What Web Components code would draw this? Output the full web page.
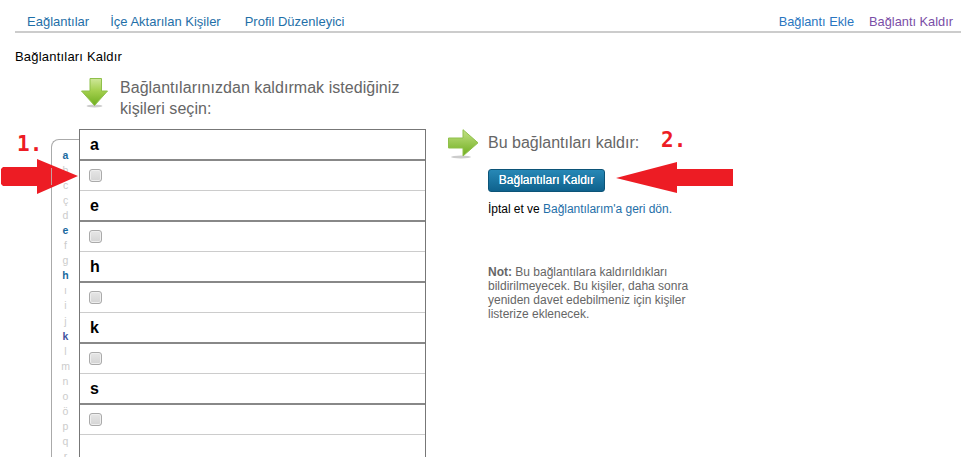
<!DOCTYPE html>
<html lang="tr"><head><meta charset="utf-8"><title>Bağlantıları Kaldır</title>
<style>
html,body{margin:0;padding:0;background:#fff;height:457px;overflow:hidden}
body{font-family:"Liberation Sans",Arial,sans-serif;color:#000}
</style></head><body>
<app-page></app-page>
<script>
function def(name, html, init){
  customElements.define(name, class extends HTMLElement{
    constructor(){super();const s=this.attachShadow({mode:"open"});s.innerHTML=html;}
    connectedCallback(){ if(init&&!this._i){this._i=1;init(this);} }
  });
}
def("top-nav",`<style>
:host{display:flex;justify-content:space-between;margin:0 3px 0 15px;height:31px;border-bottom:2px solid #ccc;font-size:13px}
div{display:flex;padding:14px 8px 0 12px;gap:21px;line-height:15px}
a{color:#1f6fa8;text-decoration:none;white-space:nowrap}
a:nth-child(3){margin-left:3px}
a.r{color:#2a76c0}a.v{color:#7a4ea6}
div.e{gap:15px;padding-right:8px;font-size:12.8px}
</style>
<div><a>Eağlantılar</a><a>İçe Aktarılan Kişiler</a><a>Profil Düzenleyici</a></div>
<div class="e"><a class="r">Bağlantı Ekle</a><a class="v">Bağlantı Kaldır</a></div>`);

def("step-heading",`<style>
:host{display:flex;font-size:16px;line-height:21px;color:#666;letter-spacing:.05px}
</style><slot name="icon"></slot><span><slot></slot></span>`);

def("alpha-tab",`<style>
:host{display:block;width:27px;height:330px;margin-top:10px;border:1px solid #aaa;border-right:0;border-bottom:0;border-radius:8px 0 0 0;background:#fff}
ul{list-style:none;margin:0;padding:8px 0 0;text-align:center;font-size:10.5px;line-height:15px;color:#ccc}
li{height:15.05px}
b{color:#1a6a9f}
b.d{color:#3f559e}
</style><ul id="u"></ul>`, el=>{
  const u=el.shadowRoot.getElementById("u");
  const on=["a","e","h","k"];
  "a b c ç d e f g h ı i j k l m n o ö p q r".split(" ").forEach(c=>{
    const li=document.createElement("li");
    if(on.includes(c)){const b=document.createElement("b");b.textContent=c;if(c=="k")b.className="d";li.append(b);}else li.textContent=c;
    u.append(li);
  });
});

def("letter-row",`<style>
:host{display:flex;align-items:center;box-sizing:border-box;height:31px;padding-left:10px;border-bottom:2px solid #888;font:bold 16px "Liberation Sans",Arial,sans-serif}
</style><slot></slot>`);
def("check-row",`<style>
:host{display:flex;align-items:center;box-sizing:border-box;height:30px;padding-left:9px;border-bottom:1px solid #ccc}
i{display:block;width:11px;height:11px;border:1px solid #aaa;border-radius:3px;background:linear-gradient(#e6e6e6,#d4d4d4);box-shadow:inset 0 0 0 1px #eee}
</style><i></i>`);

def("friend-list",`<style>
:host{display:block;width:347px;height:340px;box-sizing:border-box;border:1px solid #777;border-bottom:0;background:#fff;overflow:hidden}
</style>
<letter-row>a</letter-row><check-row></check-row>
<letter-row>e</letter-row><check-row></check-row>
<letter-row>h</letter-row><check-row></check-row>
<letter-row>k</letter-row><check-row></check-row>
<letter-row>s</letter-row><check-row></check-row>`);

def("side-panel",`<style>
:host{display:block;width:260px;font-size:12px;line-height:14px}
.btn{box-sizing:border-box;width:117px;height:23px;margin:10px 0 0 40px;border:1px solid #0c5478;border-radius:3px;background:linear-gradient(#2788b6,#0f628d);color:#fff;font:400 12px/21px "Liberation Sans",Arial,sans-serif;text-align:center;text-shadow:0 0 .5px #fff}
p{margin:0 0 0 40px}
.c{margin-top:10px;letter-spacing:-.03px}
a{color:#1f6fa8}
.n{margin-top:49px;width:215px;color:#666}
.h{display:flex;font-size:16px;line-height:20px;color:#666;align-items:center;height:30px}
.h span{margin-left:9px;margin-top:-3px}
</style>
<div class="h"><slot name="icon"></slot><span>Bu bağlantıları kaldır:</span></div>
<div class="btn">Bağlantıları Kaldır</div>
<p class="c">İptal et ve <a>Bağlantılarım'a geri dön.</a></p>
<p class="n"><b>Not:</b> Bu bağlantılara kaldırıldıkları bildirilmeyecek. Bu kişiler, daha sonra yeniden davet edebilmeniz için kişiler listerize eklenecek.</p>`);

def("app-page",`<style>
:host{display:block;position:relative;width:964px;height:457px;overflow:hidden}
h1{font:400 13px/15px "Liberation Sans",Arial,sans-serif;letter-spacing:.2px;margin:16px 0 0 15px;color:#000}
.hd{margin:13px 0 0 81px;width:320px}
.hd svg{flex:none;display:block;margin:1px 12px 0 0}
.cols{display:flex;margin:10px 0 0 51px;height:340px}
side-panel{margin:0 0 0 22px}
side-panel svg{flex:none;display:block}
.num{position:absolute;color:#ed1c24;font:bold 21px/22px "DejaVu Sans Mono",monospace;white-space:nowrap}
.ov{position:absolute;display:block}
.ln{position:absolute;left:51px;top:168px;width:1px;height:17px;background:#c9a0a0}
</style>
<svg width="0" height="0" style="position:absolute"><defs>
<linearGradient id="gd" x1="0" y1="0" x2="0" y2="1"><stop offset="0" stop-color="#cfe79a"/><stop offset=".45" stop-color="#a4d04e"/><stop offset="1" stop-color="#6fae1f"/></linearGradient>
<linearGradient id="gr" x1="0" y1="0" x2="0" y2="1"><stop offset="0" stop-color="#c3e184"/><stop offset="1" stop-color="#6fae1f"/></linearGradient>
</defs></svg>
<top-nav></top-nav>
<h1>Bağlantıları Kaldır</h1>
<step-heading class="hd">
  <svg slot="icon" width="27" height="30" viewBox="0 0 27 30">
    <ellipse cx="13.5" cy="28" rx="8" ry="1.5" fill="#ccc"/>
    <path d="M9 .5h11.500v12.500h6L13.500 27.500.5 13H9z" fill="url(#gd)" stroke="#8fc04a"/>
  </svg>
  Bağlantılarınızdan kaldırmak istediğiniz kişileri seçin:
</step-heading>
<div class="cols">
  <alpha-tab></alpha-tab>
  <friend-list></friend-list>
  <side-panel>
    <svg slot="icon" width="31" height="30" viewBox="0 0 31 30">
      <ellipse cx="13" cy="28" rx="10" ry="1.5" fill="#ccc"/>
      <path d="M.5 9H15V.7L30 13.8 15 27V19H.5z" fill="url(#gr)" stroke="#8fc04a"/>
    </svg>
  </side-panel>
</div>
<span class="num" style="left:17px;top:133px">1.</span>
<span class="num" style="left:661px;top:129px">2.</span>
<svg class="ov" style="left:0;top:155px" width="80" height="44" viewBox="0 0 80 44"><path d="M3 12H37V4L78 21 37 39V31H3L1 29V14z" fill="#ed1c24"/></svg>
<div class="ln"></div>
<svg class="ov" style="left:612px;top:158px" width="124" height="40" viewBox="0 0 124 40"><path d="M4 20L65 4V11H121V28H65V35z" fill="#ed1c24"/></svg>
`);
</script>
</body></html>
